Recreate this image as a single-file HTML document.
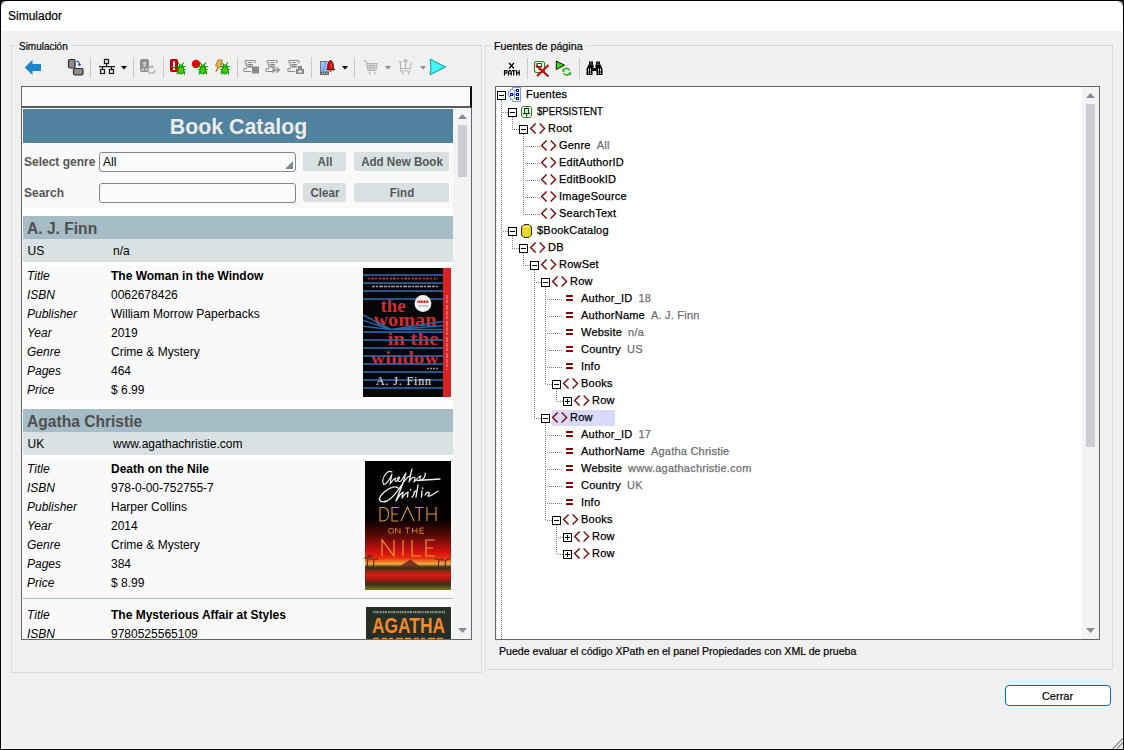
<!DOCTYPE html><html><head><meta charset="utf-8"><style>
html,body{margin:0;padding:0;width:1124px;height:750px;overflow:hidden;background:#000}
*{box-sizing:border-box}
.a{position:absolute}
.t{position:absolute;line-height:1;white-space:nowrap;font-family:"Liberation Sans",sans-serif}
svg{position:absolute;overflow:visible}
</style></head><body><div class="a" style="left:0px;top:0px;width:1124px;height:12px;background:#000;"></div>
<div class="a" style="left:1px;top:1px;width:8px;height:8px;background:#6a6a6a;border-radius:2px 0 0 0"></div>
<div class="a" style="left:1115px;top:1px;width:8px;height:8px;background:#6a6a6a;border-radius:0 2px 0 0"></div>
<div class="a" style="left:1px;top:1px;width:1122px;height:748px;background:#f0f0f0;border-left:1px solid #fff;border-right:1px solid #fff;border-bottom:1px solid #fff;border-radius:7px 7px 0 0"></div>
<div class="a" style="left:1px;top:1px;width:1122px;height:30px;background:#fff;border-radius:7px 7px 0 0"></div>
<div class="t" style="left:8px;top:9.84px;font-size:12px;color:#000;font-weight:normal;font-style:normal;letter-spacing:0px;-webkit-text-stroke-width:0.2px">Simulador</div>
<div class="a" style="left:11px;top:45px;width:471px;height:628px;background:transparent;border:1px solid #dcdcdc"></div>
<div class="a" style="left:17px;top:40px;width:54px;height:12px;background:#f0f0f0;"></div>
<div class="t" style="left:19px;top:40.69px;font-size:11px;color:#000;font-weight:normal;font-style:normal;letter-spacing:0px;-webkit-text-stroke-width:0.2px;transform:scaleX(0.905);transform-origin:0 0">Simulación</div>
<div class="a" style="left:485px;top:45px;width:628px;height:625px;background:transparent;border:1px solid #dcdcdc"></div>
<div class="a" style="left:491px;top:40px;width:94px;height:12px;background:#f0f0f0;"></div>
<div class="t" style="left:494px;top:40.69px;font-size:11px;color:#000;font-weight:normal;font-style:normal;letter-spacing:0px;-webkit-text-stroke-width:0.2px;transform:scaleX(0.972);transform-origin:0 0">Fuentes de página</div>
<div class="a" style="left:90px;top:57px;width:1px;height:21px;background:#c8c8c8;"></div>
<div class="a" style="left:133px;top:57px;width:1px;height:21px;background:#c8c8c8;"></div>
<div class="a" style="left:163px;top:57px;width:1px;height:21px;background:#c8c8c8;"></div>
<div class="a" style="left:237px;top:57px;width:1px;height:21px;background:#c8c8c8;"></div>
<div class="a" style="left:311px;top:57px;width:1px;height:21px;background:#c8c8c8;"></div>
<div class="a" style="left:354px;top:57px;width:1px;height:21px;background:#c8c8c8;"></div>
<div class="a" style="left:527px;top:58px;width:1px;height:21px;background:#c8c8c8;"></div>
<div class="a" style="left:579px;top:58px;width:1px;height:21px;background:#c8c8c8;"></div>
<svg style="left:24px;top:59px" width="18" height="17" viewBox="0 0 18 17"><path d="M0.8 8.5 L8.5 0.8 V5 H17 V12 H8.5 V16.2 Z" fill="#1b87d0"/></svg>
<svg style="left:67px;top:58px" width="17" height="18" viewBox="0 0 17 18"><rect x="1.5" y="1.5" width="6.5" height="8.5" rx="1.5" fill="#8c8c8c" stroke="#2a2a2a" stroke-width="1.2"/><rect x="6.5" y="10.5" width="9.5" height="6.5" rx="1.5" fill="#8c8c8c" stroke="#2a2a2a" stroke-width="1.2"/><path d="M9.2 3.3 C11 3 12.3 4 12.6 6.2" fill="none" stroke="#0a3cf0" stroke-width="1.1"/><path d="M10.8 6 H14.2 L12.5 8.2Z" fill="#0a3cf0"/></svg>
<svg style="left:98px;top:58px" width="18" height="17" viewBox="0 0 18 17"><g fill="none" stroke="#1e1e1e" stroke-width="1.25"><rect x="6.5" y="1.5" width="4" height="4"/><path d="M8.5 5.5 V8.5 M1 8.5 H17 M4.5 8.5 V11 M13.5 8.5 V11"/><rect x="2.5" y="11.5" width="4" height="4"/><rect x="11.5" y="11.5" width="4" height="4"/></g></svg>
<svg style="left:121px;top:66px" width="6" height="4" viewBox="0 0 6 4"><path d="M0 0 H6 L3 3.5Z" fill="#000"/></svg>
<svg style="left:139px;top:58px" width="17" height="17" viewBox="0 0 17 17"><rect x="1" y="1" width="9" height="13" rx="2" fill="#8f8f8f"/><path d="M5.5 3 L8 6 H3Z M4.5 6 H6.5 V9 H4.5Z" fill="#c8c8c8"/><rect x="2.5" y="10.5" width="2.5" height="2" fill="#d0d0d0"/><rect x="6" y="10.5" width="2.5" height="2" fill="#d0d0d0"/><path d="M12.5 8.7 A3.3 3.3 0 1 0 15.8 12" fill="none" stroke="#b4b4b4" stroke-width="1.5"/><path d="M12.3 6.8 L15.3 8.7 L12.3 10.6Z" fill="#b4b4b4"/></svg>
<svg style="left:169px;top:58px" width="19" height="18" viewBox="0 0 19 18"><rect x="1.5" y="1.5" width="7" height="12" rx="1.2" fill="#e00000" stroke="#8a0000" stroke-width="1"/><rect x="4" y="3.5" width="2" height="5.5" fill="#fff"/><rect x="4" y="10" width="2" height="2" fill="#fff"/><g transform="translate(5,4)"><g stroke="#089008" stroke-width="1.05" fill="none"><path d="M4 0.5 L6 3.5 M9.8 0.5 L7.8 3.5 M2.2 4.6 H4.8 M11.6 4.6 H9 M2.2 7.4 H4 M11.6 7.4 H9.8 M3.3 12.6 V9.8 L4.6 9.2 M10.5 12.6 V9.8 L9.2 9.2"/></g><ellipse cx="6.9" cy="8.2" rx="3.1" ry="3.9" fill="#44cc00" stroke="#089008" stroke-width="1"/><rect x="5.4" y="3" width="3" height="2" fill="#44cc00" stroke="#089008" stroke-width="0.8"/></g></svg>
<svg style="left:191px;top:58px" width="19" height="18" viewBox="0 0 19 18"><circle cx="5" cy="6" r="4.2" fill="#f00000"/><g transform="translate(5,4)"><g stroke="#089008" stroke-width="1.05" fill="none"><path d="M4 0.5 L6 3.5 M9.8 0.5 L7.8 3.5 M2.2 4.6 H4.8 M11.6 4.6 H9 M2.2 7.4 H4 M11.6 7.4 H9.8 M3.3 12.6 V9.8 L4.6 9.2 M10.5 12.6 V9.8 L9.2 9.2"/></g><ellipse cx="6.9" cy="8.2" rx="3.1" ry="3.9" fill="#44cc00" stroke="#089008" stroke-width="1"/><rect x="5.4" y="3" width="3" height="2" fill="#44cc00" stroke="#089008" stroke-width="0.8"/></g></svg>
<svg style="left:213px;top:58px" width="19" height="18" viewBox="0 0 19 18"><path d="M5 2 L9.5 2 L7 6 L9 6 L3 13.5 L5 8 L2.5 8Z" fill="#f5b84a" stroke="#8a5a10" stroke-width="0.7"/><g transform="translate(5,4)"><g stroke="#089008" stroke-width="1.05" fill="none"><path d="M4 0.5 L6 3.5 M9.8 0.5 L7.8 3.5 M2.2 4.6 H4.8 M11.6 4.6 H9 M2.2 7.4 H4 M11.6 7.4 H9.8 M3.3 12.6 V9.8 L4.6 9.2 M10.5 12.6 V9.8 L9.2 9.2"/></g><ellipse cx="6.9" cy="8.2" rx="3.1" ry="3.9" fill="#44cc00" stroke="#089008" stroke-width="1"/><rect x="5.4" y="3" width="3" height="2" fill="#44cc00" stroke="#089008" stroke-width="0.8"/></g></svg>
<svg style="left:243px;top:59px" width="18" height="17" viewBox="0 0 18 17"><g fill="none" stroke="#8a8a8a" stroke-width="1.1"><path d="M3 1.5 H11 C12.5 1.5 12.5 4 11 4 M3 1.5 C1.5 1.5 1.5 4 3 4 L4 8 H10.5 M4.5 3.5 H9.5 M4.5 5.5 H10 M5 7 H9.5"/><path d="M4 9.5 H1.8 C0.5 9.5 0.5 12.5 1.8 12.5 H8"/></g><rect x="9" y="7.5" width="7" height="7" fill="#8a8a8a"/></svg>
<svg style="left:265px;top:59px" width="18" height="17" viewBox="0 0 18 17"><g fill="none" stroke="#8a8a8a" stroke-width="1.1"><path d="M3 1.5 H11 C12.5 1.5 12.5 4 11 4 M3 1.5 C1.5 1.5 1.5 4 3 4 L4 8 H10.5 M4.5 3.5 H9.5 M4.5 5.5 H10 M5 7 H9.5"/><path d="M4 9.5 H1.8 C0.5 9.5 0.5 12.5 1.8 12.5 H8"/></g><path d="M7.5 7.5 L11.5 11 L7.5 14.5Z M11.5 7.5 L15.5 11 L11.5 14.5Z" fill="#8a8a8a" opacity="0.9"/></svg>
<svg style="left:287px;top:59px" width="18" height="17" viewBox="0 0 18 17"><g fill="none" stroke="#8a8a8a" stroke-width="1.1"><path d="M3 1.5 H11 C12.5 1.5 12.5 4 11 4 M3 1.5 C1.5 1.5 1.5 4 3 4 L4 8 H10.5 M4.5 3.5 H9.5 M4.5 5.5 H10 M5 7 H9.5"/><path d="M4 9.5 H1.8 C0.5 9.5 0.5 12.5 1.8 12.5 H8"/></g><rect x="9" y="10" width="8" height="5" fill="#8a8a8a"/><rect x="11" y="7" width="4" height="3" fill="#8a8a8a"/><ellipse cx="13" cy="12.5" rx="1.8" ry="1.2" fill="#eee"/></svg>
<svg style="left:319px;top:59px" width="18" height="17" viewBox="0 0 18 17"><defs><linearGradient id="pg" x1="0" y1="0" x2="1" y2="1"><stop offset="0" stop-color="#b8d4ff"/><stop offset="1" stop-color="#2a78f0"/></linearGradient></defs><rect x="1.5" y="2.5" width="8" height="13" fill="url(#pg)" stroke="#707070" stroke-width="1"/><rect x="1" y="13" width="9" height="2.6" fill="#606060"/><rect x="2.6" y="13.8" width="1.2" height="1" fill="#eee"/><rect x="4.9" y="13.8" width="1.2" height="1" fill="#eee"/><rect x="7.2" y="13.8" width="1.2" height="1" fill="#eee"/><path d="M11.5 1 L13.3 3 C14 4 14.3 5 14.3 6.5 V9 L16 10.8 H7 L8.7 9 V6.5 C8.7 5 9 4 9.7 3Z" fill="#f00000" stroke="#fff" stroke-width="2.2" stroke-linejoin="round"/><path d="M11.5 1 L13.3 3 C14 4 14.3 5 14.3 6.5 V9 L16 10.8 H7 L8.7 9 V6.5 C8.7 5 9 4 9.7 3Z" fill="#f00000" stroke="#111" stroke-width="0.9" stroke-linejoin="round"/><path d="M9.8 11.3 L11.5 13 L13.2 11.3Z" fill="#e00000"/><rect x="12" y="3.5" width="1" height="6" fill="#ff6060" opacity="0.7"/></svg>
<svg style="left:342px;top:66px" width="6" height="4" viewBox="0 0 6 4"><path d="M0 0 H6 L3 3.5Z" fill="#000"/></svg>
<svg style="left:363px;top:60px" width="16" height="15" viewBox="0 0 16 15"><g fill="none" stroke="#b4b4b4" stroke-width="1.1"><path d="M0.5 1 H3 L5 10.5 H13.5 M3.8 3.5 H14 L13.3 9 H4.8 M4.3 5.5 H13.8 M4.6 7.3 H13.5 M7 3.5 V9 M10 3.5 V9 M6 12.5 L6.8 13.8 L7.6 12.5 M11 12.5 L11.8 13.8 L12.6 12.5"/></g></svg>
<svg style="left:385px;top:66px" width="6" height="4" viewBox="0 0 6 4"><path d="M0 0 H6 L3 3.5Z" fill="#8a8a8a"/></svg>
<svg style="left:398px;top:58px" width="16" height="17" viewBox="0 0 16 17"><g fill="none" stroke="#b4b4b4" stroke-width="1.1"><path d="M0.5 3.5 H2.5 V13 H13 M2.5 10.5 H12.5 L13.2 4.5 M7.5 10 V1.5 M5 4 L7.5 1.5 L10 4 M4 14.5 L4.8 15.8 L5.6 14.5 M10 14.5 L10.8 15.8 L11.6 14.5"/></g></svg>
<svg style="left:420px;top:66px" width="6" height="4" viewBox="0 0 6 4"><path d="M0 0 H6 L3 3.5Z" fill="#8a8a8a"/></svg>
<svg style="left:429px;top:58px" width="18" height="18" viewBox="0 0 18 18"><path d="M1.3 1.3 L16.5 8.9 L1.3 16.5 Q2.5 8.9 1.3 1.3Z" fill="#45f8f8" stroke="#10a8a8" stroke-width="1.1" stroke-linejoin="round"/></svg>
<svg style="left:503px;top:62px" width="17" height="14" viewBox="0 0 17 14"><g stroke="#000" stroke-width="1.15" fill="none"><path d="M6 1 L11 6.5 M11 1 L6 6.5"/><path d="M1.5 13.5 V8.6 H3.9 V11 H1.5"/><path d="M5.5 13.5 V9.6 L6.4 8.6 H7.4 L8.3 9.6 V13.5 M5.5 11.2 H8.3"/><path d="M9 8.6 H12.5 M10.75 8.6 V13.5"/><path d="M13.6 8.2 V13.5 M16.2 8.2 V13.5 M13.6 10.8 H16.2"/></g></svg>
<svg style="left:533px;top:60px" width="18" height="18" viewBox="0 0 18 18"><rect x="1.5" y="1.5" width="10" height="11" rx="2.2" fill="#f8fff8" stroke="#2a7a2a" stroke-width="1.1"/><path d="M4 3.5 H8.5 V6.5 H4Z M3 7 H9.5 M6.2 7 V10.5" fill="none" stroke="#1a5a1a" stroke-width="1.1"/><path d="M3 5 L15.5 16.5 M15.5 5 L4 16" stroke="#cc0008" stroke-width="1.9"/></svg>
<svg style="left:555px;top:60px" width="18" height="17" viewBox="0 0 18 17"><path d="M1.3 1 L9.5 5.2 L1.3 9.5Z" fill="#3fd40f" stroke="#111" stroke-width="1"/><g fill="none" stroke="#17b817" stroke-width="1.5"><path d="M14.8 10.5 A3.6 3.6 0 0 0 8.5 10"/><path d="M8.5 13 A3.6 3.6 0 0 0 14.8 13.5"/></g><path d="M7.3 8.5 L10.2 11.2 L7.3 12Z M16 15.5 L13.1 12.8 L16 12Z" fill="#17b817"/></svg>
<svg style="left:586px;top:61px" width="17" height="15" viewBox="0 0 17 15"><g fill="#000"><rect x="3" y="0.5" width="4" height="3"/><rect x="10" y="0.5" width="4" height="3"/><path d="M2.5 3.5 H7.5 V7 H9.5 V3.5 H14.5 L16.5 8 V14 H10.5 V10 H6.5 V14 H0.5 V8Z"/></g><g fill="#ddd"><rect x="4.5" y="1.5" width="1" height="1"/><rect x="11.5" y="1.5" width="1" height="1"/><rect x="2" y="7.5" width="1" height="3"/><rect x="4" y="7.5" width="1" height="3"/><rect x="12" y="7.5" width="1" height="3"/><rect x="14" y="7.5" width="1" height="3"/><rect x="2" y="11.5" width="1" height="1.5"/><rect x="4" y="11.5" width="1" height="1.5"/><rect x="12" y="11.5" width="1" height="1.5"/><rect x="14" y="11.5" width="1" height="1.5"/></g></svg>
<div class="a" style="left:21px;top:86px;width:451px;height:554px;background:#fafafa;border:1px solid #646464"></div>
<div class="a" style="left:21px;top:86px;width:451px;height:22px;background:#fafafa;border:1px solid #646464;border-right:2px solid #111;border-bottom:2px solid #5c5c5c"></div>
<div class="a" style="left:23px;top:109px;width:430px;height:530px;background:#fff;"></div>
<div class="a" style="left:453px;top:109px;width:18px;height:530px;background:#f3f3f3;"></div>
<svg style="left:458px;top:114px" width="9" height="5"><path d="M0 5 L4.5 0 L9 5Z" fill="#868a9c"/></svg>
<div class="a" style="left:458px;top:125px;width:9px;height:52px;background:#cdced3;"></div>
<svg style="left:458px;top:628px" width="9" height="5"><path d="M0 0 L4.5 5 L9 0Z" fill="#868a9c"/></svg>
<div class="a" style="left:23px;top:109px;width:430px;height:530px;overflow:hidden"><div class="a" style="left:-23px;top:-109px;width:1124px;height:750px">
<div class="a" style="left:23px;top:109px;width:430px;height:34px;background:#50819f;"></div>
<div class="t" style="left:238.5px;top:116.94px;font-size:21.33px;color:#ececec;font-weight:bold;font-style:normal;letter-spacing:0px;transform:translateX(-50%)">Book Catalog</div>
<div class="a" style="left:23px;top:143px;width:430px;height:65px;background:#f9f9f9;"></div>
<div class="t" style="left:24px;top:155.84px;font-size:12px;color:#555;font-weight:bold;font-style:normal;letter-spacing:0px;">Select genre</div>
<div class="t" style="left:24px;top:186.84px;font-size:12px;color:#555;font-weight:bold;font-style:normal;letter-spacing:0px;">Search</div>
<div class="a" style="left:99px;top:152px;width:197px;height:20px;background:#fafafa;border:1px solid #7d8892;border-radius:3px"></div>
<div class="t" style="left:103px;top:155.84px;font-size:12px;color:#000;font-weight:normal;font-style:normal;letter-spacing:0px;">All</div>
<svg style="left:285px;top:161px" width="8" height="8"><path d="M8 0 L8 8 L0 8Z" fill="#7d8892"/></svg>
<div class="a" style="left:99px;top:183px;width:197px;height:20px;background:#fafafa;border:1px solid #7d8892;border-radius:3px"></div>
<div class="a" style="left:303px;top:152px;width:43px;height:19px;background:#d8e0e2;border-radius:2px"></div>
<div class="t" style="left:324.5px;top:155.84px;font-size:12px;color:#575757;font-weight:bold;font-style:normal;letter-spacing:0px;transform:translateX(-50%) scaleX(0.965)">All</div>
<div class="a" style="left:354px;top:152px;width:95px;height:19px;background:#d8e0e2;border-radius:2px"></div>
<div class="t" style="left:401.5px;top:155.84px;font-size:12px;color:#575757;font-weight:bold;font-style:normal;letter-spacing:0px;transform:translateX(-50%) scaleX(0.965)">Add New Book</div>
<div class="a" style="left:303px;top:183px;width:43px;height:19px;background:#d8e0e2;border-radius:2px"></div>
<div class="t" style="left:324.5px;top:186.84px;font-size:12px;color:#575757;font-weight:bold;font-style:normal;letter-spacing:0px;transform:translateX(-50%) scaleX(0.965)">Clear</div>
<div class="a" style="left:354px;top:183px;width:95px;height:19px;background:#d8e0e2;border-radius:2px"></div>
<div class="t" style="left:401.5px;top:186.84px;font-size:12px;color:#575757;font-weight:bold;font-style:normal;letter-spacing:0px;transform:translateX(-50%) scaleX(0.965)">Find</div>
<div class="a" style="left:23px;top:216px;width:430px;height:23px;background:#a6bcc6;"></div>
<div class="t" style="left:27px;top:220.79px;font-size:15.6px;color:#4f4f4f;font-weight:bold;font-style:normal;letter-spacing:0px;">A. J. Finn</div>
<div class="a" style="left:23px;top:239px;width:430px;height:23px;background:#d9e1e3;"></div>
<div class="t" style="left:27.5px;top:244.84px;font-size:12px;color:#000;font-weight:normal;font-style:normal;letter-spacing:0px;">US</div>
<div class="t" style="left:113px;top:244.84px;font-size:12px;color:#000;font-weight:normal;font-style:normal;letter-spacing:0px;">n/a</div>
<div class="a" style="left:23px;top:266px;width:430px;height:135px;background:#f9f9f9;"></div>
<div class="t" style="left:27px;top:269.84px;font-size:12px;color:#000;font-weight:normal;font-style:italic;letter-spacing:0px;">Title</div>
<div class="t" style="left:111px;top:269.84px;font-size:12px;color:#000;font-weight:bold;font-style:normal;letter-spacing:0px;">The Woman in the Window</div>
<div class="t" style="left:27px;top:288.84px;font-size:12px;color:#000;font-weight:normal;font-style:italic;letter-spacing:0px;">ISBN</div>
<div class="t" style="left:111px;top:288.84px;font-size:12px;color:#000;font-weight:normal;font-style:normal;letter-spacing:0px;">0062678426</div>
<div class="t" style="left:27px;top:307.84px;font-size:12px;color:#000;font-weight:normal;font-style:italic;letter-spacing:0px;">Publisher</div>
<div class="t" style="left:111px;top:307.84px;font-size:12px;color:#000;font-weight:normal;font-style:normal;letter-spacing:0px;">William Morrow Paperbacks</div>
<div class="t" style="left:27px;top:326.84px;font-size:12px;color:#000;font-weight:normal;font-style:italic;letter-spacing:0px;">Year</div>
<div class="t" style="left:111px;top:326.84px;font-size:12px;color:#000;font-weight:normal;font-style:normal;letter-spacing:0px;">2019</div>
<div class="t" style="left:27px;top:345.84px;font-size:12px;color:#000;font-weight:normal;font-style:italic;letter-spacing:0px;">Genre</div>
<div class="t" style="left:111px;top:345.84px;font-size:12px;color:#000;font-weight:normal;font-style:normal;letter-spacing:0px;">Crime &amp; Mystery</div>
<div class="t" style="left:27px;top:364.84px;font-size:12px;color:#000;font-weight:normal;font-style:italic;letter-spacing:0px;">Pages</div>
<div class="t" style="left:111px;top:364.84px;font-size:12px;color:#000;font-weight:normal;font-style:normal;letter-spacing:0px;">464</div>
<div class="t" style="left:27px;top:383.84px;font-size:12px;color:#000;font-weight:normal;font-style:italic;letter-spacing:0px;">Price</div>
<div class="t" style="left:111px;top:383.84px;font-size:12px;color:#000;font-weight:normal;font-style:normal;letter-spacing:0px;">$ 6.99</div>
<div class="a" style="left:23px;top:409px;width:430px;height:23px;background:#a6bcc6;"></div>
<div class="t" style="left:27px;top:413.79px;font-size:15.6px;color:#4f4f4f;font-weight:bold;font-style:normal;letter-spacing:0px;">Agatha Christie</div>
<div class="a" style="left:23px;top:432px;width:430px;height:23px;background:#d9e1e3;"></div>
<div class="t" style="left:27.5px;top:437.84px;font-size:12px;color:#000;font-weight:normal;font-style:normal;letter-spacing:0px;">UK</div>
<div class="t" style="left:113px;top:437.84px;font-size:12px;color:#000;font-weight:normal;font-style:normal;letter-spacing:0px;">www.agathachristie.com</div>
<div class="a" style="left:23px;top:459px;width:430px;height:180px;background:#f9f9f9;"></div>
<div class="t" style="left:27px;top:462.84px;font-size:12px;color:#000;font-weight:normal;font-style:italic;letter-spacing:0px;">Title</div>
<div class="t" style="left:111px;top:462.84px;font-size:12px;color:#000;font-weight:bold;font-style:normal;letter-spacing:0px;">Death on the Nile</div>
<div class="t" style="left:27px;top:481.84px;font-size:12px;color:#000;font-weight:normal;font-style:italic;letter-spacing:0px;">ISBN</div>
<div class="t" style="left:111px;top:481.84px;font-size:12px;color:#000;font-weight:normal;font-style:normal;letter-spacing:0px;">978-0-00-752755-7</div>
<div class="t" style="left:27px;top:500.84px;font-size:12px;color:#000;font-weight:normal;font-style:italic;letter-spacing:0px;">Publisher</div>
<div class="t" style="left:111px;top:500.84px;font-size:12px;color:#000;font-weight:normal;font-style:normal;letter-spacing:0px;">Harper Collins</div>
<div class="t" style="left:27px;top:519.84px;font-size:12px;color:#000;font-weight:normal;font-style:italic;letter-spacing:0px;">Year</div>
<div class="t" style="left:111px;top:519.84px;font-size:12px;color:#000;font-weight:normal;font-style:normal;letter-spacing:0px;">2014</div>
<div class="t" style="left:27px;top:538.84px;font-size:12px;color:#000;font-weight:normal;font-style:italic;letter-spacing:0px;">Genre</div>
<div class="t" style="left:111px;top:538.84px;font-size:12px;color:#000;font-weight:normal;font-style:normal;letter-spacing:0px;">Crime &amp; Mystery</div>
<div class="t" style="left:27px;top:557.84px;font-size:12px;color:#000;font-weight:normal;font-style:italic;letter-spacing:0px;">Pages</div>
<div class="t" style="left:111px;top:557.84px;font-size:12px;color:#000;font-weight:normal;font-style:normal;letter-spacing:0px;">384</div>
<div class="t" style="left:27px;top:576.84px;font-size:12px;color:#000;font-weight:normal;font-style:italic;letter-spacing:0px;">Price</div>
<div class="t" style="left:111px;top:576.84px;font-size:12px;color:#000;font-weight:normal;font-style:normal;letter-spacing:0px;">$ 8.99</div>
<div class="a" style="left:23px;top:598px;width:430px;height:1px;background:#a6bcc6;"></div>
<div class="t" style="left:27px;top:608.84px;font-size:12px;color:#000;font-weight:normal;font-style:italic;letter-spacing:0px;">Title</div>
<div class="t" style="left:111px;top:608.84px;font-size:12px;color:#000;font-weight:bold;font-style:normal;letter-spacing:0px;">The Mysterious Affair at Styles</div>
<div class="t" style="left:27px;top:627.84px;font-size:12px;color:#000;font-weight:normal;font-style:italic;letter-spacing:0px;">ISBN</div>
<div class="t" style="left:111px;top:627.84px;font-size:12px;color:#000;font-weight:normal;font-style:normal;letter-spacing:0px;">9780525565109</div>
<svg style="left:363px;top:268px" width="88" height="129" viewBox="0 0 88 129">
<rect width="88" height="129" fill="#060608"/>
<rect x="80" y="0" width="8" height="129" fill="#d92424"/>
<path d="M84 27 V102" stroke="#f6d0d0" stroke-width="1.2" stroke-dasharray="4 1 3 2 5 1" opacity="0.6"/>
<path d="M5 10.5 H75" stroke="#d03030" stroke-width="2" stroke-dasharray="2 1 3 1 2 2" opacity="0.85"/>
<path d="M9 18.5 H75" stroke="#e0e0e0" stroke-width="1.6" stroke-dasharray="3 1 2 1 4 1" opacity="0.7"/>
<text x="17.5" y="44" font-family="Liberation Serif" font-weight="bold" font-size="18" fill="#d42c2a" textLength="25" lengthAdjust="spacingAndGlyphs">the</text>
<text x="10.5" y="58" font-family="Liberation Serif" font-weight="bold" font-size="18" fill="#d42c2a" textLength="63" lengthAdjust="spacingAndGlyphs">woman</text>
<text x="24.5" y="77" font-family="Liberation Serif" font-weight="bold" font-size="18" fill="#d42c2a" textLength="51" lengthAdjust="spacingAndGlyphs">in the</text>
<text x="7.5" y="95.5" font-family="Liberation Serif" font-weight="bold" font-size="18" fill="#d42c2a" textLength="68.5" lengthAdjust="spacingAndGlyphs">window</text>
<rect x="0" y="6.2" width="80" height="1.7" fill="#2763a8"/><rect x="0" y="14.2" width="80" height="1.7" fill="#2763a8"/><rect x="0" y="22.2" width="80" height="1.7" fill="#2763a8"/><rect x="0" y="30.2" width="80" height="1.7" fill="#2763a8"/><rect x="0" y="63.2" width="80" height="1.7" fill="#2763a8"/><rect x="0" y="71.2" width="80" height="1.7" fill="#2763a8"/><rect x="0" y="79.2" width="80" height="1.7" fill="#2763a8"/><rect x="0" y="87.2" width="80" height="1.7" fill="#2763a8"/><rect x="0" y="95.2" width="80" height="1.7" fill="#2763a8"/><rect x="0" y="103.2" width="80" height="1.7" fill="#2763a8"/><rect x="0" y="111.2" width="80" height="1.7" fill="#2763a8"/><rect x="0" y="119.2" width="80" height="1.7" fill="#2763a8"/>
<path d="M0 47 L28 61.4 L80 53.4 M0 52.4 L28 61.4 L80 57.7 M0 58.2 L28 61.4 L80 61.4" stroke="#2763a8" stroke-width="1.5" fill="none"/>
<circle cx="60" cy="35.5" r="8.4" fill="#f4f4f4"/>
<path d="M54.5 33.8 H65.5" stroke="#c82020" stroke-width="2.6" stroke-dasharray="1.2 0.4"/>
<rect x="55" y="37.5" width="10" height="0.9" fill="#999"/>
<text x="13" y="116.6" font-family="Liberation Serif" font-size="12" fill="#e8e8e8" textLength="55" lengthAdjust="spacing">A. J. Finn</text>
<path d="M64 100.5 H75" stroke="#ccc" stroke-width="1.3" stroke-dasharray="2 1" opacity="0.7"/>
</svg>
<svg style="left:365px;top:461px" width="86" height="129" viewBox="0 0 86 129">
<defs><linearGradient id="sky" x1="0" y1="0" x2="0" y2="1">
<stop offset="0" stop-color="#000"/><stop offset="0.45" stop-color="#050000"/><stop offset="0.58" stop-color="#5a0a05"/><stop offset="0.7" stop-color="#d01010"/><stop offset="0.75" stop-color="#ea2a10"/><stop offset="0.78" stop-color="#f07a20"/><stop offset="0.8" stop-color="#f0b040"/>
<stop offset="0.815" stop-color="#5a4a28"/><stop offset="0.85" stop-color="#8a2612"/><stop offset="0.885" stop-color="#e01c14"/><stop offset="0.92" stop-color="#a01a10"/><stop offset="0.955" stop-color="#3a3018"/><stop offset="1" stop-color="#7a7a28"/></linearGradient></defs>
<rect width="86" height="129" fill="url(#sky)"/>
<g fill="none" stroke="#f0f0f0" stroke-width="1.15" stroke-linecap="round" stroke-linejoin="round">
<path d="M27 11 C22 8 16 18 18.5 23 C20.5 25 25 18 27 13 L25 23 C27 20 29 17 31 17 C29 19 30 22 33 19 C35 17 35 16 33.5 16 C31.5 18 33 22 36 20 C38 17 40 14 41 12 L38 22 C40 19 42 16 45 15 L47 8 L44 21 C46 17 49 15 50 17 L49 21 C51 19 54 15 56 15 C54 17 55 21 58 18 C60 16 61 12 60 12"/>
<path d="M33 27 C30 24 20 28 15 36 C13 40 17 42 22 40 C28 37 33 30 38 22 L31 40 C34 35 36 32 38 31 L37 37 C39 34 41 32 43 31 L42.5 36 M45.5 28.5 L45.7 29 M51 30 C48 30 50 35 47 36 M53 24 L51 36 M57 30 L56.5 36 M57.5 27 L57.7 27.5 M60 34 C62 30 66 30 63 35 C66 36 70 32 73 30 M52 19.5 L75 18" stroke-width="1.35"/>
</g>
<g fill="none" stroke="#e89a30" stroke-width="1.1">
<path d="M15 46.5 V60 H17.5 C22 60 23.5 56 23.5 53 C23.5 50 22 46.5 17.5 46.5Z"/>
<path d="M33.5 46.5 H27 V60 H33.5 M27 53 H32.5"/>
<path d="M36 60 L42.5 46 L49 60"/>
<path d="M50 46.5 H58.5 M54.2 46.5 V60"/>
<path d="M62 46 V60 M71 46 V60 M62 53 H71"/>
</g>
<g fill="none" stroke="#e8902c" stroke-width="0.8">
<ellipse cx="26" cy="69.8" rx="2.6" ry="2.6"/><path d="M30.5 72.5 V67 L35 72.5 V67"/>
<path d="M40 67 H45 M42.5 67 V72.5 M47.5 67 V72.5 M52 67 V72.5 M47.5 69.8 H52 M59 67 H55 V72.5 H59 M55 69.8 H58"/>
</g>
<g fill="none" stroke="#f0a030" stroke-width="1.1">
<path d="M17 95 V79 L29 95 V79"/><path d="M38 79 V95"/><path d="M47 79 V95 H56"/><path d="M70 79 H61 V95 H70 M61 87 H68"/>
</g>
<path d="M34 106 L45 98.5 L56 106Z" fill="#6a3020" opacity="0.9"/>
<path d="M2 107 L3 97 M3 97 C1 95 -1 97 -1 98 M3 97 C5 94 8 96 8 97 M3 97 C3 94 6 94 6 95 M8 108 L9 99 M9 99 C7 97 5 98 5 99 M9 99 C11 97 13 98 13 99" stroke="#3a2414" stroke-width="1" fill="none"/>
<path d="M73 108 L74 99 M74 99 C72 97 70 98 70 99 M74 99 C76 97 78 98 78 99 M80 108 L80.5 100 M80.5 100 C79 98 76 99 76 100 M80.5 100 C82 97 85 98 85 99" stroke="#3a2414" stroke-width="1" fill="none"/>
<rect x="0" y="106" width="86" height="2.5" fill="#3a2e18" opacity="0.8"/>
</svg>
<svg style="left:366px;top:607px" width="85" height="40" viewBox="0 0 85 40">
<rect width="85" height="40" fill="#252f25"/>
<path d="M7 5.2 H79" stroke="#d8d8d8" stroke-width="2.2" stroke-dasharray="1 0.6 1.2 0.6 2 1 1.5 0.5" opacity="0.6"/>
<text x="6" y="26.4" font-family="Liberation Sans" font-weight="bold" font-size="21.5" fill="#f28a2c" textLength="73" lengthAdjust="spacingAndGlyphs">AGATHA</text>
<path d="M7 31.8 H79" stroke="#f28a2c" stroke-width="2" stroke-dasharray="6 3 5 2 4 3 7 2"/>
</svg>
</div></div>
<div class="a" style="left:495px;top:86px;width:605px;height:554px;background:#fff;border:1px solid #646464"></div>
<div class="a" style="left:1082px;top:87px;width:17px;height:552px;background:#f3f3f3;"></div>
<svg style="left:1086px;top:93px" width="9" height="5"><path d="M0 5 L4.5 0 L9 5Z" fill="#868a9c"/></svg>
<div class="a" style="left:1086px;top:104px;width:9px;height:343px;background:#cdced3;"></div>
<svg style="left:1086px;top:628px" width="9" height="5"><path d="M0 0 L4.5 5 L9 0Z" fill="#868a9c"/></svg>
<div class="a" style="left:501px;top:100px;width:1px;height:539px;background:repeating-linear-gradient(to bottom,#808080 0 1px,transparent 1px 2px)"></div>
<div class="a" style="left:503px;top:112px;width:5px;height:1px;background:repeating-linear-gradient(to right,#808080 0 1px,transparent 1px 2px)"></div>
<div class="a" style="left:512px;top:117px;width:1px;height:13px;background:repeating-linear-gradient(to bottom,#808080 0 1px,transparent 1px 2px)"></div>
<div class="a" style="left:514px;top:129px;width:5px;height:1px;background:repeating-linear-gradient(to right,#808080 0 1px,transparent 1px 2px)"></div>
<div class="a" style="left:523px;top:134px;width:1px;height:81px;background:repeating-linear-gradient(to bottom,#808080 0 1px,transparent 1px 2px)"></div>
<div class="a" style="left:525px;top:146px;width:16px;height:1px;background:repeating-linear-gradient(to right,#808080 0 1px,transparent 1px 2px)"></div>
<div class="a" style="left:525px;top:163px;width:16px;height:1px;background:repeating-linear-gradient(to right,#808080 0 1px,transparent 1px 2px)"></div>
<div class="a" style="left:525px;top:180px;width:16px;height:1px;background:repeating-linear-gradient(to right,#808080 0 1px,transparent 1px 2px)"></div>
<div class="a" style="left:525px;top:197px;width:16px;height:1px;background:repeating-linear-gradient(to right,#808080 0 1px,transparent 1px 2px)"></div>
<div class="a" style="left:525px;top:214px;width:16px;height:1px;background:repeating-linear-gradient(to right,#808080 0 1px,transparent 1px 2px)"></div>
<div class="a" style="left:503px;top:231px;width:5px;height:1px;background:repeating-linear-gradient(to right,#808080 0 1px,transparent 1px 2px)"></div>
<div class="a" style="left:512px;top:236px;width:1px;height:13px;background:repeating-linear-gradient(to bottom,#808080 0 1px,transparent 1px 2px)"></div>
<div class="a" style="left:514px;top:248px;width:5px;height:1px;background:repeating-linear-gradient(to right,#808080 0 1px,transparent 1px 2px)"></div>
<div class="a" style="left:523px;top:253px;width:1px;height:13px;background:repeating-linear-gradient(to bottom,#808080 0 1px,transparent 1px 2px)"></div>
<div class="a" style="left:525px;top:265px;width:5px;height:1px;background:repeating-linear-gradient(to right,#808080 0 1px,transparent 1px 2px)"></div>
<div class="a" style="left:534px;top:270px;width:1px;height:149px;background:repeating-linear-gradient(to bottom,#808080 0 1px,transparent 1px 2px)"></div>
<div class="a" style="left:536px;top:282px;width:5px;height:1px;background:repeating-linear-gradient(to right,#808080 0 1px,transparent 1px 2px)"></div>
<div class="a" style="left:545px;top:287px;width:1px;height:98px;background:repeating-linear-gradient(to bottom,#808080 0 1px,transparent 1px 2px)"></div>
<div class="a" style="left:547px;top:299px;width:15px;height:1px;background:repeating-linear-gradient(to right,#808080 0 1px,transparent 1px 2px)"></div>
<div class="a" style="left:547px;top:316px;width:15px;height:1px;background:repeating-linear-gradient(to right,#808080 0 1px,transparent 1px 2px)"></div>
<div class="a" style="left:547px;top:333px;width:15px;height:1px;background:repeating-linear-gradient(to right,#808080 0 1px,transparent 1px 2px)"></div>
<div class="a" style="left:547px;top:350px;width:15px;height:1px;background:repeating-linear-gradient(to right,#808080 0 1px,transparent 1px 2px)"></div>
<div class="a" style="left:547px;top:367px;width:15px;height:1px;background:repeating-linear-gradient(to right,#808080 0 1px,transparent 1px 2px)"></div>
<div class="a" style="left:547px;top:384px;width:5px;height:1px;background:repeating-linear-gradient(to right,#808080 0 1px,transparent 1px 2px)"></div>
<div class="a" style="left:556px;top:389px;width:1px;height:13px;background:repeating-linear-gradient(to bottom,#808080 0 1px,transparent 1px 2px)"></div>
<div class="a" style="left:558px;top:401px;width:5px;height:1px;background:repeating-linear-gradient(to right,#808080 0 1px,transparent 1px 2px)"></div>
<div class="a" style="left:536px;top:418px;width:5px;height:1px;background:repeating-linear-gradient(to right,#808080 0 1px,transparent 1px 2px)"></div>
<div class="a" style="left:545px;top:423px;width:1px;height:98px;background:repeating-linear-gradient(to bottom,#808080 0 1px,transparent 1px 2px)"></div>
<div class="a" style="left:547px;top:435px;width:15px;height:1px;background:repeating-linear-gradient(to right,#808080 0 1px,transparent 1px 2px)"></div>
<div class="a" style="left:547px;top:452px;width:15px;height:1px;background:repeating-linear-gradient(to right,#808080 0 1px,transparent 1px 2px)"></div>
<div class="a" style="left:547px;top:469px;width:15px;height:1px;background:repeating-linear-gradient(to right,#808080 0 1px,transparent 1px 2px)"></div>
<div class="a" style="left:547px;top:486px;width:15px;height:1px;background:repeating-linear-gradient(to right,#808080 0 1px,transparent 1px 2px)"></div>
<div class="a" style="left:547px;top:503px;width:15px;height:1px;background:repeating-linear-gradient(to right,#808080 0 1px,transparent 1px 2px)"></div>
<div class="a" style="left:547px;top:520px;width:5px;height:1px;background:repeating-linear-gradient(to right,#808080 0 1px,transparent 1px 2px)"></div>
<div class="a" style="left:556px;top:525px;width:1px;height:30px;background:repeating-linear-gradient(to bottom,#808080 0 1px,transparent 1px 2px)"></div>
<div class="a" style="left:558px;top:537px;width:5px;height:1px;background:repeating-linear-gradient(to right,#808080 0 1px,transparent 1px 2px)"></div>
<div class="a" style="left:558px;top:554px;width:5px;height:1px;background:repeating-linear-gradient(to right,#808080 0 1px,transparent 1px 2px)"></div>
<div class="a" style="left:552px;top:410px;width:63px;height:16px;background:#d9d9fa;"></div>
<svg style="left:497px;top:91px" width="9" height="9"><rect x="0.5" y="0.5" width="8" height="8" fill="#fff" stroke="#000"/><rect x="2" y="4" width="5" height="1" fill="#000"/></svg>
<svg style="left:508px;top:87px" width="14" height="15"><path d="M4.5 0.5 H12.5 V14.5 H4.5 V12.5 H2.5 V9.5 H0.5 V4.5 H2.5 V2.5 H4.5Z" fill="#fff" stroke="#6f9bff"/><path d="M5 7.5 H6.5 M6.5 3.5 V11.5 M6.5 3.5 H8 M6.5 7.5 H8 M6.5 11.5 H8" stroke="#6f9bff" fill="none"/>
<rect x="2" y="6" width="3" height="3" fill="#0000f0"/><rect x="3" y="7" width="1" height="1" fill="#fff"/><rect x="8" y="2" width="3" height="3" fill="#0000f0"/><rect x="9" y="3" width="1" height="1" fill="#fff"/><rect x="8" y="6" width="3" height="3" fill="#0000f0"/><rect x="9" y="7" width="1" height="1" fill="#fff"/><rect x="8" y="10" width="3" height="3" fill="#0000f0"/><rect x="9" y="11" width="1" height="1" fill="#fff"/></svg>
<div class="t" style="left:526px;top:88.69px;font-size:11px;color:#000;font-weight:normal;font-style:normal;letter-spacing:0.22px;-webkit-text-stroke-width:0.25px">Fuentes</div>
<svg style="left:508px;top:108px" width="9" height="9"><rect x="0.5" y="0.5" width="8" height="8" fill="#fff" stroke="#000"/><rect x="2" y="4" width="5" height="1" fill="#000"/></svg>
<svg style="left:521px;top:106px" width="11" height="12"><rect x="0.5" y="0.5" width="10" height="11" rx="2.5" fill="#fff" stroke="#2a7a2a" stroke-width="1"/><rect x="3.5" y="2.5" width="4" height="5" fill="#c8f8c8" stroke="#0a4a0a" stroke-width="1"/><rect x="2" y="7" width="7" height="1.2" fill="#0a4a0a"/><rect x="5" y="8" width="1.1" height="2.6" fill="#0a4a0a"/></svg>
<div class="t" style="left:537px;top:105.69px;font-size:11px;color:#000;font-weight:normal;font-style:normal;letter-spacing:0px;-webkit-text-stroke-width:0.25px;transform:scaleX(0.875);transform-origin:0 0">$PERSISTENT</div>
<svg style="left:519px;top:125px" width="9" height="9"><rect x="0.5" y="0.5" width="8" height="8" fill="#fff" stroke="#000"/><rect x="2" y="4" width="5" height="1" fill="#000"/></svg>
<svg style="left:530px;top:123px" width="16" height="12"><path d="M5.6 0.4 L0.6 5.5 L5.6 10.6 M9.6 0.4 L14.6 5.5 L9.6 10.6" fill="none" stroke="#820606" stroke-width="1.4"/></svg>
<div class="t" style="left:548px;top:122.69px;font-size:11px;color:#000;font-weight:normal;font-style:normal;letter-spacing:0.22px;-webkit-text-stroke-width:0.25px">Root</div>
<svg style="left:541px;top:140px" width="16" height="12"><path d="M5.6 0.4 L0.6 5.5 L5.6 10.6 M9.6 0.4 L14.6 5.5 L9.6 10.6" fill="none" stroke="#820606" stroke-width="1.4"/></svg>
<div class="t" style="left:559px;top:139.69px;font-size:11px;color:#000;font-weight:normal;font-style:normal;letter-spacing:0.22px;-webkit-text-stroke-width:0.25px">Genre<span style="color:#6e6e6e;margin-left:6px">All</span></div>
<svg style="left:541px;top:157px" width="16" height="12"><path d="M5.6 0.4 L0.6 5.5 L5.6 10.6 M9.6 0.4 L14.6 5.5 L9.6 10.6" fill="none" stroke="#820606" stroke-width="1.4"/></svg>
<div class="t" style="left:559px;top:156.69px;font-size:11px;color:#000;font-weight:normal;font-style:normal;letter-spacing:0.22px;-webkit-text-stroke-width:0.25px">EditAuthorID</div>
<svg style="left:541px;top:174px" width="16" height="12"><path d="M5.6 0.4 L0.6 5.5 L5.6 10.6 M9.6 0.4 L14.6 5.5 L9.6 10.6" fill="none" stroke="#820606" stroke-width="1.4"/></svg>
<div class="t" style="left:559px;top:173.69px;font-size:11px;color:#000;font-weight:normal;font-style:normal;letter-spacing:0.22px;-webkit-text-stroke-width:0.25px">EditBookID</div>
<svg style="left:541px;top:191px" width="16" height="12"><path d="M5.6 0.4 L0.6 5.5 L5.6 10.6 M9.6 0.4 L14.6 5.5 L9.6 10.6" fill="none" stroke="#820606" stroke-width="1.4"/></svg>
<div class="t" style="left:559px;top:190.69px;font-size:11px;color:#000;font-weight:normal;font-style:normal;letter-spacing:0.22px;-webkit-text-stroke-width:0.25px">ImageSource</div>
<svg style="left:541px;top:208px" width="16" height="12"><path d="M5.6 0.4 L0.6 5.5 L5.6 10.6 M9.6 0.4 L14.6 5.5 L9.6 10.6" fill="none" stroke="#820606" stroke-width="1.4"/></svg>
<div class="t" style="left:559px;top:207.69px;font-size:11px;color:#000;font-weight:normal;font-style:normal;letter-spacing:0.22px;-webkit-text-stroke-width:0.25px">SearchText</div>
<svg style="left:508px;top:227px" width="9" height="9"><rect x="0.5" y="0.5" width="8" height="8" fill="#fff" stroke="#000"/><rect x="2" y="4" width="5" height="1" fill="#000"/></svg>
<svg style="left:521px;top:224px" width="11" height="14"><path d="M3 0.5 H8 L10.5 3 V11 L8 13.5 H3 L0.5 11 V3Z" fill="#ead600" stroke="#2a2a3a" stroke-width="1"/><rect x="2" y="2.3" width="7" height="1.5" fill="#fff07a"/><rect x="2" y="4" width="7" height="0.8" fill="#c8b400" opacity="0.6"/><rect x="4.7" y="5" width="1.6" height="7" fill="#f4e460"/></svg>
<div class="t" style="left:537px;top:224.69px;font-size:11px;color:#000;font-weight:normal;font-style:normal;letter-spacing:0.22px;-webkit-text-stroke-width:0.25px">$BookCatalog</div>
<svg style="left:519px;top:244px" width="9" height="9"><rect x="0.5" y="0.5" width="8" height="8" fill="#fff" stroke="#000"/><rect x="2" y="4" width="5" height="1" fill="#000"/></svg>
<svg style="left:530px;top:242px" width="16" height="12"><path d="M5.6 0.4 L0.6 5.5 L5.6 10.6 M9.6 0.4 L14.6 5.5 L9.6 10.6" fill="none" stroke="#820606" stroke-width="1.4"/></svg>
<div class="t" style="left:548px;top:241.69px;font-size:11px;color:#000;font-weight:normal;font-style:normal;letter-spacing:0.22px;-webkit-text-stroke-width:0.25px">DB</div>
<svg style="left:530px;top:261px" width="9" height="9"><rect x="0.5" y="0.5" width="8" height="8" fill="#fff" stroke="#000"/><rect x="2" y="4" width="5" height="1" fill="#000"/></svg>
<svg style="left:541px;top:259px" width="16" height="12"><path d="M5.6 0.4 L0.6 5.5 L5.6 10.6 M9.6 0.4 L14.6 5.5 L9.6 10.6" fill="none" stroke="#820606" stroke-width="1.4"/></svg>
<div class="t" style="left:559px;top:258.69px;font-size:11px;color:#000;font-weight:normal;font-style:normal;letter-spacing:0.22px;-webkit-text-stroke-width:0.25px">RowSet</div>
<svg style="left:541px;top:278px" width="9" height="9"><rect x="0.5" y="0.5" width="8" height="8" fill="#fff" stroke="#000"/><rect x="2" y="4" width="5" height="1" fill="#000"/></svg>
<svg style="left:552px;top:276px" width="16" height="12"><path d="M5.6 0.4 L0.6 5.5 L5.6 10.6 M9.6 0.4 L14.6 5.5 L9.6 10.6" fill="none" stroke="#820606" stroke-width="1.4"/></svg>
<div class="t" style="left:570px;top:275.69px;font-size:11px;color:#000;font-weight:normal;font-style:normal;letter-spacing:0.22px;-webkit-text-stroke-width:0.25px">Row</div>
<div class="a" style="left:566px;top:295px;width:7px;height:2px;background:#800000;border-radius:0.5px"></div>
<div class="a" style="left:566px;top:299px;width:7px;height:2px;background:#800000;border-radius:0.5px"></div>
<div class="t" style="left:581px;top:292.69px;font-size:11px;color:#000;font-weight:normal;font-style:normal;letter-spacing:0.22px;-webkit-text-stroke-width:0.25px">Author_ID<span style="color:#6e6e6e;margin-left:6px">18</span></div>
<div class="a" style="left:566px;top:312px;width:7px;height:2px;background:#800000;border-radius:0.5px"></div>
<div class="a" style="left:566px;top:316px;width:7px;height:2px;background:#800000;border-radius:0.5px"></div>
<div class="t" style="left:581px;top:309.69px;font-size:11px;color:#000;font-weight:normal;font-style:normal;letter-spacing:0.22px;-webkit-text-stroke-width:0.25px">AuthorName<span style="color:#6e6e6e;margin-left:6px">A. J. Finn</span></div>
<div class="a" style="left:566px;top:329px;width:7px;height:2px;background:#800000;border-radius:0.5px"></div>
<div class="a" style="left:566px;top:333px;width:7px;height:2px;background:#800000;border-radius:0.5px"></div>
<div class="t" style="left:581px;top:326.69px;font-size:11px;color:#000;font-weight:normal;font-style:normal;letter-spacing:0.22px;-webkit-text-stroke-width:0.25px">Website<span style="color:#6e6e6e;margin-left:6px">n/a</span></div>
<div class="a" style="left:566px;top:346px;width:7px;height:2px;background:#800000;border-radius:0.5px"></div>
<div class="a" style="left:566px;top:350px;width:7px;height:2px;background:#800000;border-radius:0.5px"></div>
<div class="t" style="left:581px;top:343.69px;font-size:11px;color:#000;font-weight:normal;font-style:normal;letter-spacing:0.22px;-webkit-text-stroke-width:0.25px">Country<span style="color:#6e6e6e;margin-left:6px">US</span></div>
<div class="a" style="left:566px;top:363px;width:7px;height:2px;background:#800000;border-radius:0.5px"></div>
<div class="a" style="left:566px;top:367px;width:7px;height:2px;background:#800000;border-radius:0.5px"></div>
<div class="t" style="left:581px;top:360.69px;font-size:11px;color:#000;font-weight:normal;font-style:normal;letter-spacing:0.22px;-webkit-text-stroke-width:0.25px">Info</div>
<svg style="left:552px;top:380px" width="9" height="9"><rect x="0.5" y="0.5" width="8" height="8" fill="#fff" stroke="#000"/><rect x="2" y="4" width="5" height="1" fill="#000"/></svg>
<svg style="left:563px;top:378px" width="16" height="12"><path d="M5.6 0.4 L0.6 5.5 L5.6 10.6 M9.6 0.4 L14.6 5.5 L9.6 10.6" fill="none" stroke="#820606" stroke-width="1.4"/></svg>
<div class="t" style="left:581px;top:377.69px;font-size:11px;color:#000;font-weight:normal;font-style:normal;letter-spacing:0.22px;-webkit-text-stroke-width:0.25px">Books</div>
<svg style="left:563px;top:397px" width="9" height="9"><rect x="0.5" y="0.5" width="8" height="8" fill="#fff" stroke="#000"/><rect x="2" y="4" width="5" height="1" fill="#000"/><rect x="4" y="2" width="1" height="5" fill="#000"/></svg>
<svg style="left:574px;top:395px" width="16" height="12"><path d="M5.6 0.4 L0.6 5.5 L5.6 10.6 M9.6 0.4 L14.6 5.5 L9.6 10.6" fill="none" stroke="#820606" stroke-width="1.4"/></svg>
<div class="t" style="left:592px;top:394.69px;font-size:11px;color:#000;font-weight:normal;font-style:normal;letter-spacing:0.22px;-webkit-text-stroke-width:0.25px">Row</div>
<svg style="left:541px;top:414px" width="9" height="9"><rect x="0.5" y="0.5" width="8" height="8" fill="#fff" stroke="#000"/><rect x="2" y="4" width="5" height="1" fill="#000"/></svg>
<svg style="left:552px;top:412px" width="16" height="12"><path d="M5.6 0.4 L0.6 5.5 L5.6 10.6 M9.6 0.4 L14.6 5.5 L9.6 10.6" fill="none" stroke="#820606" stroke-width="1.4"/></svg>
<div class="t" style="left:570px;top:411.69px;font-size:11px;color:#000;font-weight:normal;font-style:normal;letter-spacing:0.22px;-webkit-text-stroke-width:0.25px">Row</div>
<div class="a" style="left:566px;top:431px;width:7px;height:2px;background:#800000;border-radius:0.5px"></div>
<div class="a" style="left:566px;top:435px;width:7px;height:2px;background:#800000;border-radius:0.5px"></div>
<div class="t" style="left:581px;top:428.69px;font-size:11px;color:#000;font-weight:normal;font-style:normal;letter-spacing:0.22px;-webkit-text-stroke-width:0.25px">Author_ID<span style="color:#6e6e6e;margin-left:6px">17</span></div>
<div class="a" style="left:566px;top:448px;width:7px;height:2px;background:#800000;border-radius:0.5px"></div>
<div class="a" style="left:566px;top:452px;width:7px;height:2px;background:#800000;border-radius:0.5px"></div>
<div class="t" style="left:581px;top:445.69px;font-size:11px;color:#000;font-weight:normal;font-style:normal;letter-spacing:0.22px;-webkit-text-stroke-width:0.25px">AuthorName<span style="color:#6e6e6e;margin-left:6px">Agatha Christie</span></div>
<div class="a" style="left:566px;top:465px;width:7px;height:2px;background:#800000;border-radius:0.5px"></div>
<div class="a" style="left:566px;top:469px;width:7px;height:2px;background:#800000;border-radius:0.5px"></div>
<div class="t" style="left:581px;top:462.69px;font-size:11px;color:#000;font-weight:normal;font-style:normal;letter-spacing:0.22px;-webkit-text-stroke-width:0.25px">Website<span style="color:#6e6e6e;margin-left:6px">www.agathachristie.com</span></div>
<div class="a" style="left:566px;top:482px;width:7px;height:2px;background:#800000;border-radius:0.5px"></div>
<div class="a" style="left:566px;top:486px;width:7px;height:2px;background:#800000;border-radius:0.5px"></div>
<div class="t" style="left:581px;top:479.69px;font-size:11px;color:#000;font-weight:normal;font-style:normal;letter-spacing:0.22px;-webkit-text-stroke-width:0.25px">Country<span style="color:#6e6e6e;margin-left:6px">UK</span></div>
<div class="a" style="left:566px;top:499px;width:7px;height:2px;background:#800000;border-radius:0.5px"></div>
<div class="a" style="left:566px;top:503px;width:7px;height:2px;background:#800000;border-radius:0.5px"></div>
<div class="t" style="left:581px;top:496.69px;font-size:11px;color:#000;font-weight:normal;font-style:normal;letter-spacing:0.22px;-webkit-text-stroke-width:0.25px">Info</div>
<svg style="left:552px;top:516px" width="9" height="9"><rect x="0.5" y="0.5" width="8" height="8" fill="#fff" stroke="#000"/><rect x="2" y="4" width="5" height="1" fill="#000"/></svg>
<svg style="left:563px;top:514px" width="16" height="12"><path d="M5.6 0.4 L0.6 5.5 L5.6 10.6 M9.6 0.4 L14.6 5.5 L9.6 10.6" fill="none" stroke="#820606" stroke-width="1.4"/></svg>
<div class="t" style="left:581px;top:513.69px;font-size:11px;color:#000;font-weight:normal;font-style:normal;letter-spacing:0.22px;-webkit-text-stroke-width:0.25px">Books</div>
<svg style="left:563px;top:533px" width="9" height="9"><rect x="0.5" y="0.5" width="8" height="8" fill="#fff" stroke="#000"/><rect x="2" y="4" width="5" height="1" fill="#000"/><rect x="4" y="2" width="1" height="5" fill="#000"/></svg>
<svg style="left:574px;top:531px" width="16" height="12"><path d="M5.6 0.4 L0.6 5.5 L5.6 10.6 M9.6 0.4 L14.6 5.5 L9.6 10.6" fill="none" stroke="#820606" stroke-width="1.4"/></svg>
<div class="t" style="left:592px;top:530.69px;font-size:11px;color:#000;font-weight:normal;font-style:normal;letter-spacing:0.22px;-webkit-text-stroke-width:0.25px">Row</div>
<svg style="left:563px;top:550px" width="9" height="9"><rect x="0.5" y="0.5" width="8" height="8" fill="#fff" stroke="#000"/><rect x="2" y="4" width="5" height="1" fill="#000"/><rect x="4" y="2" width="1" height="5" fill="#000"/></svg>
<svg style="left:574px;top:548px" width="16" height="12"><path d="M5.6 0.4 L0.6 5.5 L5.6 10.6 M9.6 0.4 L14.6 5.5 L9.6 10.6" fill="none" stroke="#820606" stroke-width="1.4"/></svg>
<div class="t" style="left:592px;top:547.69px;font-size:11px;color:#000;font-weight:normal;font-style:normal;letter-spacing:0.22px;-webkit-text-stroke-width:0.25px">Row</div>
<div class="t" style="left:499px;top:645.69px;font-size:11px;color:#000;font-weight:normal;font-style:normal;letter-spacing:0px;-webkit-text-stroke-width:0.2px;transform:scaleX(0.962);transform-origin:0 0">Puede evaluar el código XPath en el panel Propiedades con XML de prueba</div>
<svg style="left:1110px;top:736px" width="14" height="14" viewBox="0 0 14 14"><path d="M12.5 12.5 L12.5 6.5 L6.5 12.5Z" fill="#e4e4f4"/><path d="M2.5 12.8 L12.8 2.5 M6.5 12.8 L12.8 6.5" stroke="#888" stroke-width="1.2"/></svg>
<div class="a" style="left:1005px;top:685px;width:106px;height:21px;background:#fff;border:1.5px solid #0067c0;border-radius:4px"></div>
<div class="t" style="left:1057.5px;top:690.69px;font-size:11px;color:#000;font-weight:normal;font-style:normal;letter-spacing:0px;transform:translateX(-50%);-webkit-text-stroke-width:0.2px">Cerrar</div></body></html>
